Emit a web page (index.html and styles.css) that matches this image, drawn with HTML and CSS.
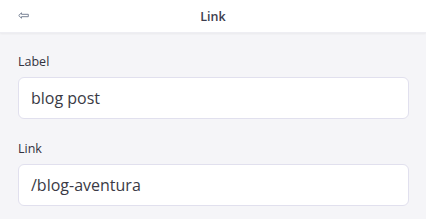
FILE: index.html
```html
<!DOCTYPE html>
<html>
<head>
<meta charset="utf-8">
<link rel="stylesheet" href="styles.css">
</head>
<body>
<header class="topbar">
  <span class="back">
    <svg width="11" height="7" viewBox="0 0 11 7"><path d="M0.7 3.5 L3.5 0.8 V2.3 H10.3 V4.7 H3.5 V6.2 Z" fill="none" stroke="#7a8496" stroke-width="1"/></svg>
  </span>
  <h1 class="title">Link</h1>
</header>
<main class="form">
  <div class="field">
    <label class="label">Label</label>
    <div class="input">blog post</div>
  </div>
  <div class="field">
    <label class="label">Link</label>
    <div class="input">/blog-aventura</div>
  </div>
</main>
</body>
</html>
```
FILE: styles.css
```css
html, body {
  margin: 0;
  padding: 0;
  background: #f5f5f8;
  font-family: "Open Sans", "Noto Sans", sans-serif;
  color: #333;
}
.topbar {
  height: 32px;
  background: #fff;
  box-shadow: 0 1px 2px rgba(0,0,0,0.05);
  border-bottom: 1px solid #eeeef3;
  display: flex;
  align-items: center;
  justify-content: center;
  position: relative;
}
.back {
  position: absolute;
  left: 18px;
  top: 12px;
  display: flex;
}
.title {
  margin: 0;
  font-size: 12.5px;
  font-weight: 600;
  color: #3d3d4e;
}
.form {
  padding: 21px 17px 0 18px;
  display: flex;
  flex-direction: column;
  gap: 22px;
}
.field {
  display: flex;
  flex-direction: column;
  gap: 7px;
}
.label {
  font-size: 12.5px;
  color: #32323f;
  line-height: 16px;
}
.input {
  height: 42px;
  box-sizing: border-box;
  border: 1px solid #e1e0ee;
  border-radius: 6px;
  background: #fff;
  padding: 0 12px;
  display: flex;
  align-items: center;
  font-size: 16px;
  color: #3a3a45;
}
```
